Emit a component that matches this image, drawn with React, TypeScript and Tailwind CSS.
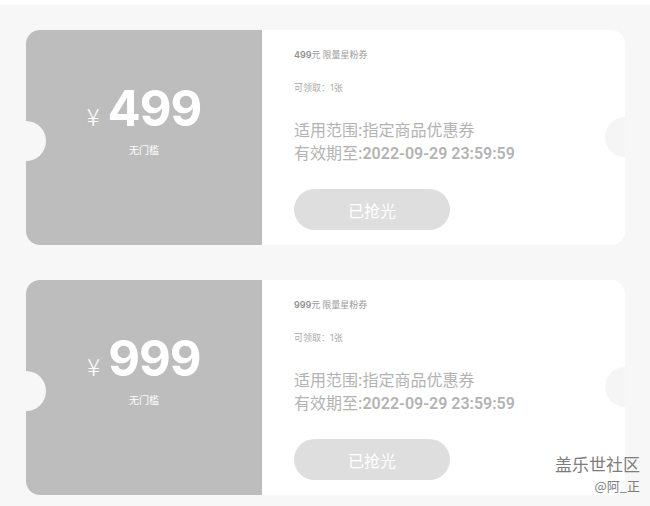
import React from 'react';

type Coupon = {
  amount: string;
};

const COUPONS: Coupon[] = [{ amount: '499' }, { amount: '999' }];

const CJK = "font-['Noto_Sans_CJK_SC','Noto_Sans',sans-serif]";
const NUM = "font-['Inter','Noto_Sans_CJK_SC',sans-serif]";
const DATE = "font-['Roboto','Noto_Sans_CJK_SC',sans-serif]";

function CouponCard({ amount }: Coupon) {
  return (
    <div className="relative flex h-[215px] w-[599px] overflow-hidden rounded-[14px] bg-white">
      <div className="flex w-[236px] shrink-0 flex-col items-center bg-[#bdbdbd] pt-[54px]">
        <div className="flex items-baseline text-white">
          <span className={`${CJK} mr-[8px] text-[24px] font-light leading-none`}>¥</span>
          <span className={`${NUM} text-[49px] font-bold leading-none tracking-[-1px]`}>{amount}</span>
        </div>
        <div className={`${CJK} mt-[12px] text-[10px] leading-none text-white`}>无门槛</div>
      </div>

      <div className={`${CJK} flex flex-col pl-8 pt-[20px]`}>
        <div className="text-[9px] leading-[10px] text-[#9a9a9a]">
          <span className={`${NUM} font-semibold text-[#8f8f8f]`}>{amount}</span>元 限量星粉券
        </div>
        <div className="mt-[23px] text-[9px] leading-[10px] text-[#aaaaaa]">
          可领取：<span className={NUM}>1</span>张
        </div>
        <div className="mt-[25px] text-[16px] leading-[23px] text-[#b3b3b3]">适用范围:指定商品优惠券</div>
        <div className="text-[16px] leading-[23px] text-[#b3b3b3]">
          有效期至:<span className={`${DATE} font-semibold`}>2022-09-29 23:59:59</span>
        </div>
        <button
          type="button"
          className="mt-[24px] flex h-[41px] w-[156px] items-center justify-center rounded-full bg-[#dedede] text-[16px] text-white"
        >
          已抢光
        </button>
      </div>

      <div className="absolute left-[-20px] top-[91px] h-[40px] w-[40px] rounded-full bg-[#f7f7f7]" />
      <div className="absolute right-[-20px] top-[87px] h-[40px] w-[40px] rounded-full bg-[#f5f5f5]" />
    </div>
  );
}

export default function App() {
  return (
    <div className="relative h-[506px] w-[650px] overflow-hidden bg-white">
      <div className="mt-[5px] flex h-[501px] flex-col gap-[35px] bg-[#f7f7f7] pl-[26px] pt-[25px]">
        {COUPONS.map((c) => (
          <CouponCard key={c.amount} {...c} />
        ))}
      </div>

      <div className={`${CJK} absolute right-[10px] top-[454px] flex flex-col items-end text-[#7d7d7d]`}>
        <span className="text-[17px] leading-[20px]">盖乐世社区</span>
        <span className="mt-[4px] text-[13px] leading-[16px]">@阿_正</span>
      </div>
    </div>
  );
}
